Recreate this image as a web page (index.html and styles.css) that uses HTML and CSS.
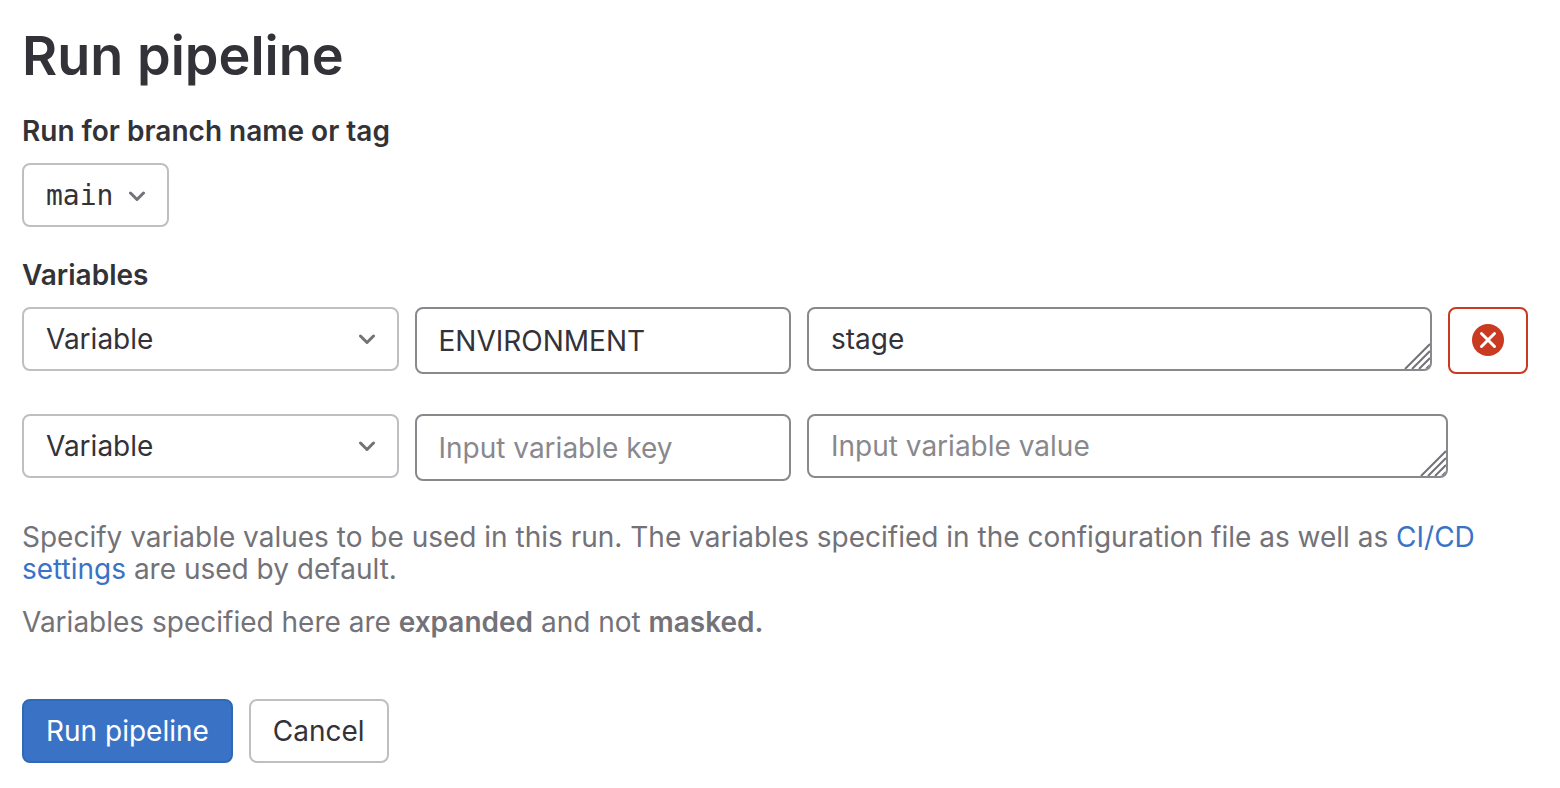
FILE: index.html
```html
<!DOCTYPE html>
<html lang="en">
<head>
<meta charset="utf-8">
<meta name="viewport" content="width=device-width, initial-scale=1">
<title>Run pipeline</title>
<link rel="stylesheet" href="styles.css">
</head>
<body>
<main class="page">
  <h1 class="title">Run pipeline</h1>
  <form class="form">
    <div class="group">
      <label class="label" for="ref">Run for branch name or tag</label>
      <button class="btn ref" id="ref" type="button" aria-haspopup="listbox">
        <span>main</span>
        <svg class="chevron" viewBox="0 0 16 10" aria-hidden="true"><path d="M1.500 2 8 8.500 14.500 2"/></svg>
      </button>
    </div>

    <fieldset class="group variables">
      <legend class="label">Variables</legend>
      <div class="row">
        <div class="cell select-wrap">
          <select class="control select" aria-label="Type of first variable"><option>Variable</option><option>File</option></select>
          <svg class="chevron select-chevron" viewBox="0 0 16 10" aria-hidden="true"><path d="M1.500 2 8 8.500 14.500 2"/></svg>
        </div>
        <input class="cell control key" type="text" value="ENVIRONMENT" placeholder="Input variable key" aria-label="First variable key">
        <div class="value-wrap">
          <textarea class="control value" rows="1" placeholder="Input variable value" aria-label="First variable value">stage</textarea>
          <svg class="grip" viewBox="0 0 26 26" aria-hidden="true"><path d="M1 26 26 1M8 26 26 8M15 26 26 15M22 26l4-4"/></svg>
        </div>
        <button class="remove" type="button" aria-label="Remove variable">
          <svg class="remove-icon" viewBox="0 0 32 32" aria-hidden="true"><circle cx="16" cy="16" r="16"/><path d="m9.500 9.500 13 13m0-13-13 13"/></svg>
        </button>
      </div>
      <div class="row row-new">
        <div class="cell select-wrap">
          <select class="control select" aria-label="Type of new variable"><option>Variable</option><option>File</option></select>
          <svg class="chevron select-chevron" viewBox="0 0 16 10" aria-hidden="true"><path d="M1.500 2 8 8.500 14.500 2"/></svg>
        </div>
        <input class="cell control key" type="text" placeholder="Input variable key" aria-label="New variable key">
        <div class="value-wrap">
          <textarea class="control value" rows="1" placeholder="Input variable value" aria-label="New variable value"></textarea>
          <svg class="grip" viewBox="0 0 26 26" aria-hidden="true"><path d="M1 26 26 1M8 26 26 8M15 26 26 15M22 26l4-4"/></svg>
        </div>
      </div>
    </fieldset>

    <div class="help">
      <p>Specify variable values to be used in this run. The variables specified in the configuration file as well as <a class="link" href="#settings">CI/CD settings</a> are used by default.</p>
      <p>Variables specified here are <strong>expanded</strong> and not <strong>masked.</strong></p>
    </div>

    <div class="actions">
      <button class="btn btn-primary" type="submit">Run pipeline</button>
      <button class="btn" type="button">Cancel</button>
    </div>
  </form>
</main>
</body>
</html>
```
FILE: styles.css
```css
*, *::before, *::after { box-sizing: border-box; }

body {
  margin: 0;
  background: #fff;
  color: #333238;
  font: 400 28px/32px Inter, "Liberation Sans", sans-serif;
}

.page { padding: 20px 32px 24px 22px; }

.title {
  margin: 0;
  font-size: 54px;
  font-weight: 600;
  line-height: 72px;
}

.form { margin-top: 23px; }

.group { margin: 0; padding: 0; border: 0; min-width: 0; }

.label {
  display: block;
  padding: 0;
  margin-bottom: 16px;
  font-weight: 600;
}

.btn {
  display: inline-flex;
  align-items: center;
  height: 64px;
  padding: 0 22px;
  border: 2px solid #bfbfc3;
  border-radius: 8px;
  background: #fff;
  color: inherit;
  font: inherit;
}

.btn-primary {
  border-color: #2f68b4;
  background: #3a73c6;
  color: #fff;
}

.ref {
  gap: 16px;
  padding-top: 2px;
  font-family: "DejaVu Sans Mono", monospace;
}

.chevron {
  width: 16px;
  height: 10px;
  fill: none;
  stroke: #737278;
  stroke-width: 3;
  stroke-linecap: round;
  stroke-linejoin: round;
}

.variables { margin-top: 32px; }

.row {
  display: flex;
  align-items: flex-start;
  gap: 16px;
}

.row-new { margin-top: 40px; }

.row-new .value-wrap { margin-right: 80px; }

.cell { flex: none; width: 25%; }

.select-wrap { position: relative; }

.control {
  display: block;
  height: 64px;
  margin: 0;
  padding: 14px 22px;
  border: 2px solid #89888d;
  border-radius: 8px;
  background: #fff;
  color: inherit;
  font: inherit;
  outline: 0;
}

.control::placeholder { color: #89888d; opacity: 1; }

.select {
  width: 100%;
  border-color: #bfbfc3;
  appearance: none;
}

.select-chevron {
  position: absolute;
  top: 27px;
  right: 24px;
  pointer-events: none;
}

.key { height: 67px; }

.value-wrap { position: relative; flex: 1; min-width: 0; }

.value {
  width: 100%;
  min-height: 64px;
  overflow: hidden;
  resize: vertical;
}

.value::-webkit-resizer { display: none; }

.grip {
  position: absolute;
  right: 2px;
  bottom: 2px;
  width: 26px;
  height: 26px;
  fill: none;
  stroke: #737278;
  stroke-width: 2;
  border-bottom-right-radius: 6px;
  pointer-events: none;
}

.remove {
  display: flex;
  flex: none;
  align-items: center;
  justify-content: center;
  width: 80px;
  height: 67px;
  padding: 0 0 2px;
  border: 2px solid #c93a20;
  border-radius: 8px;
  background: #fff;
}

.remove-icon {
  width: 32px;
  height: 32px;
  fill: #c93a20;
}

.remove-icon path { stroke: #fff; stroke-width: 3; stroke-linecap: round; }

.help { margin-top: 40px; color: #737278; }

.help p { margin: 0 0 21px; }

.help strong { font-weight: 600; }

.link { color: #3a73c6; text-decoration: none; }

.actions {
  display: flex;
  gap: 16px;
  margin-top: 61px;
}
```
